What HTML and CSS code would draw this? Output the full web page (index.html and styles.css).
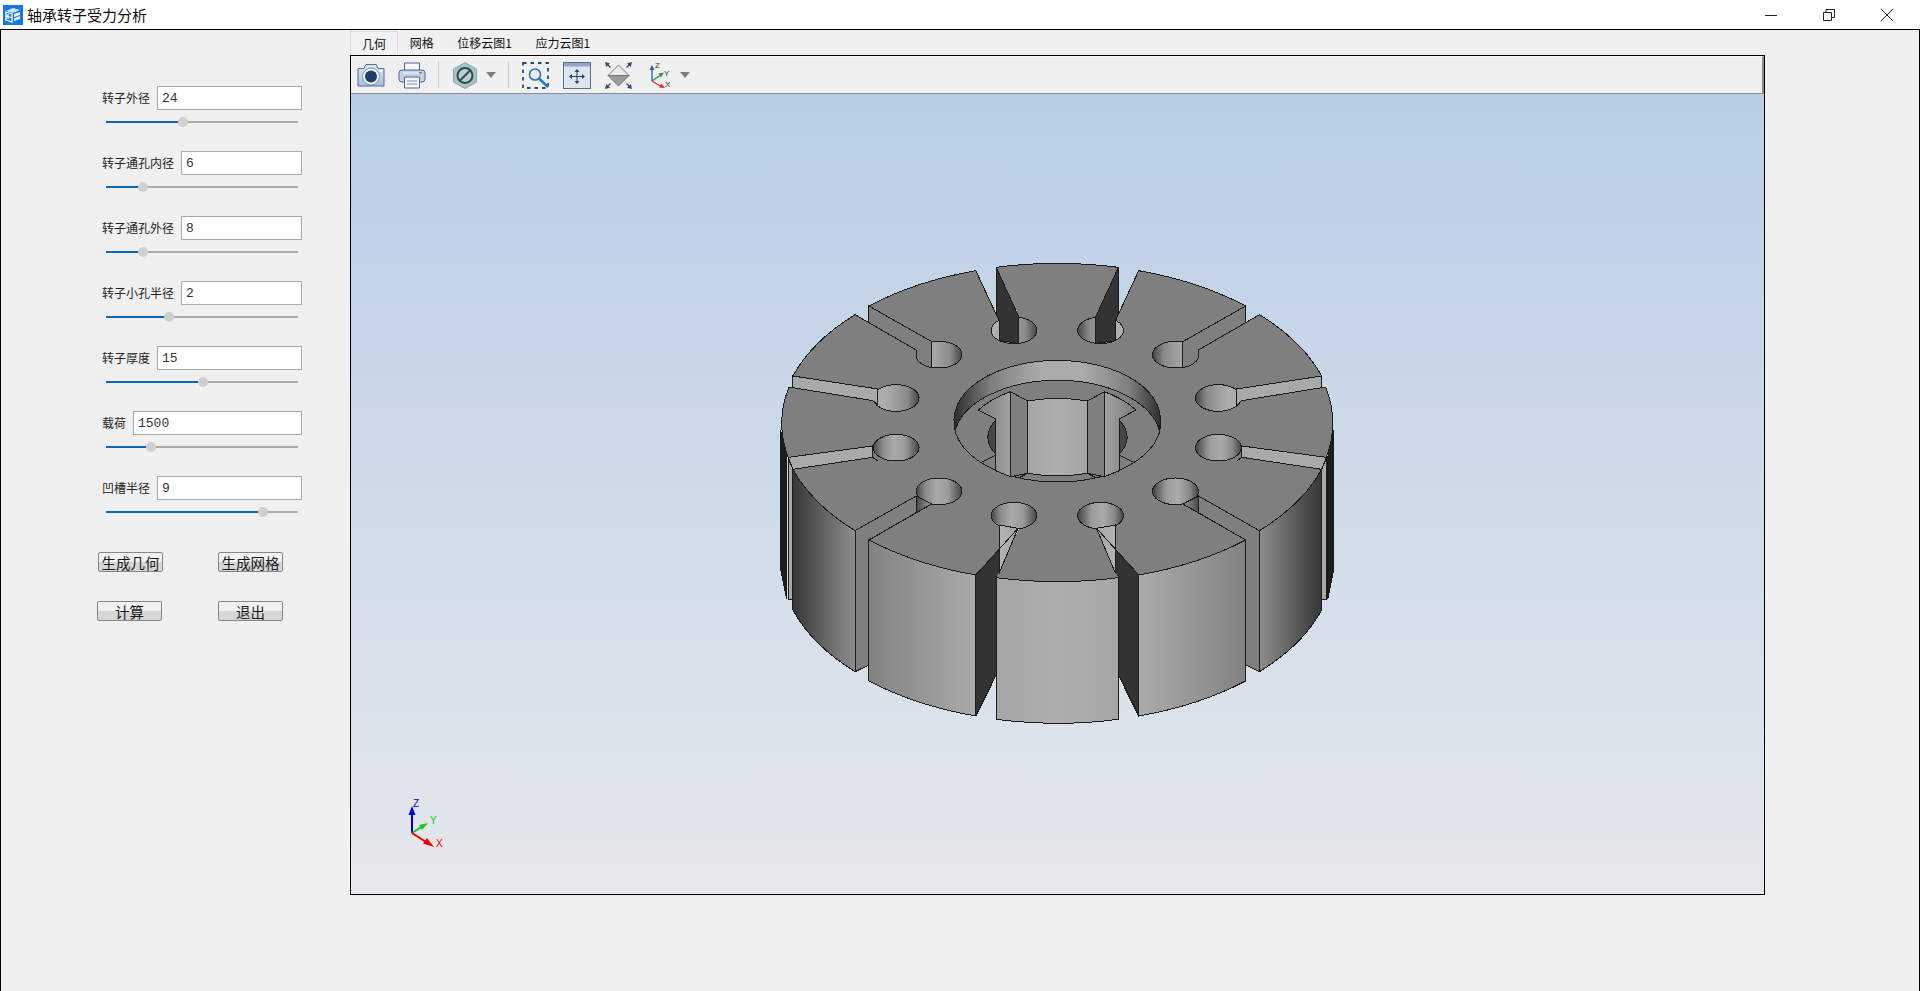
FILE: index.html
```html
<!DOCTYPE html>
<html lang="zh">
<head>
<meta charset="utf-8">
<title>轴承转子受力分析</title>
<link rel="stylesheet" href="styles.css">
</head>
<body>
<header class="titlebar">
  <svg class="app-icon" width="20" height="20" viewBox="0 0 20 20">
    <rect width="20" height="20" fill="#1a76e3"/>
    <path d="M3 6 L10 3 L17 5 L10 8 Z" fill="#cfe3fb"/>
    <path d="M3 7 L9 9 V17 L3 15 Z M5 9 V14 M3.5 11 L8.5 12.5" fill="none" stroke="#fff" stroke-width="1.3"/>
    <path d="M11 9 L17 7 V10 L11 12 Z M11 13 L17 11 V14 L11 16 Z" fill="#e9f3fe"/>
  </svg>
  <span class="app-title">轴承转子受力分析</span>
  <div class="win-controls">
    <svg width="12" height="12" viewBox="0 0 12 12"><path d="M0 6.5H12" stroke="#222" fill="none"/></svg>
    <svg width="12" height="12" viewBox="0 0 12 12"><path d="M.5 3.5H8.5V11.5H.5Z M3 3V.5H11.5V8.5H9" stroke="#222" fill="none"/></svg>
    <svg width="12" height="12" viewBox="0 0 12 12"><path d="M0 0L12 12M12 0L0 12" stroke="#222" fill="none"/></svg>
  </div>
</header>

<main class="window">
  <aside class="panel">
    <div class="field"><div class="field-row"><label class="field-label">转子外径</label><div class="field-input">24</div></div><div class="slider"><div class="slider-fill" style="width:40%"><i class="thumb"></i></div></div></div>
    <div class="field"><div class="field-row"><label class="field-label">转子通孔内径</label><div class="field-input">6</div></div><div class="slider"><div class="slider-fill" style="width:19.3%"><i class="thumb"></i></div></div></div>
    <div class="field"><div class="field-row"><label class="field-label">转子通孔外径</label><div class="field-input">8</div></div><div class="slider"><div class="slider-fill" style="width:19.3%"><i class="thumb"></i></div></div></div>
    <div class="field"><div class="field-row"><label class="field-label">转子小孔半径</label><div class="field-input">2</div></div><div class="slider"><div class="slider-fill" style="width:32.8%"><i class="thumb"></i></div></div></div>
    <div class="field"><div class="field-row"><label class="field-label">转子厚度</label><div class="field-input">15</div></div><div class="slider"><div class="slider-fill" style="width:50.5%"><i class="thumb"></i></div></div></div>
    <div class="field"><div class="field-row"><label class="field-label">载荷</label><div class="field-input">1500</div></div><div class="slider"><div class="slider-fill" style="width:23.4%"><i class="thumb"></i></div></div></div>
    <div class="field"><div class="field-row"><label class="field-label">凹槽半径</label><div class="field-input">9</div></div><div class="slider"><div class="slider-fill" style="width:81.8%"><i class="thumb"></i></div></div></div>
    <div class="btn-row btn-row-first"><button class="btn">生成几何</button><button class="btn">生成网格</button></div>
    <div class="btn-row btn-row-second"><button class="btn">计算</button><button class="btn">退出</button></div>
  </aside>

  <section class="work">
    <nav class="tabs">
      <div class="tab tab-active">几何</div>
      <div class="tab">网格</div>
      <div class="tab">位移云图1</div>
      <div class="tab">应力云图1</div>
    </nav>
    <div class="frame">
      <div class="toolbar">
        <svg class="tool tool-camera" width="28" height="24" viewBox="0 0 28 24">
          <defs><linearGradient id="camBody" x1="0" y1="0" x2="0" y2="1"><stop offset="0" stop-color="#dfe8f3"/><stop offset="1" stop-color="#a9bfdc"/></linearGradient></defs>
          <path d="M1 5.5H7L9 1.5H19L21 5.5H27V23H1Z" fill="url(#camBody)" stroke="#4f6c9c" stroke-linejoin="round"/>
          <circle cx="14" cy="13.5" r="8.5" fill="#f2f5f9" stroke="#7d93b5"/>
          <circle cx="14" cy="13.5" r="6" fill="#1f3a6d"/>
          <circle cx="24" cy="8" r="1" fill="#fff"/>
        </svg>
        <svg class="tool tool-printer" width="28" height="27" viewBox="0 0 28 27">
          <path d="M6.5 8V1H21.5V8" fill="#f4f6f9" stroke="#4a6794"/>
          <rect x="1" y="8" width="26" height="12" rx="3" fill="#c7d2df" stroke="#4a6794"/>
          <path d="M5 11H23" stroke="#eef2f6"/>
          <rect x="21" y="10" width="3" height="1.5" fill="#6c7f99"/>
          <path d="M6.5 15H21.5V26H6.5Z" fill="#f4f6f9" stroke="#4a6794"/>
          <path d="M9 19H19M9 22H19" stroke="#7d90ab"/>
        </svg>
        <span class="tool-sep"></span>
        <svg class="tool tool-hex" width="24" height="27" viewBox="0 0 24 27">
          <path d="M12 .5L23.5 7V20L12 26.5L.5 20V7Z" fill="#a9c2c4" stroke="#8aa5a8"/>
          <circle cx="12" cy="13.5" r="7.5" fill="#bcd0d1" stroke="#2f4a55" stroke-width="2"/>
          <path d="M7 18.5L17 8.5" stroke="#2f4a55" stroke-width="2"/>
        </svg>
        <svg class="tool tool-caret" width="10" height="6" viewBox="0 0 10 6"><path d="M0 0H10L5 6Z" fill="#808080"/></svg>
        <span class="tool-sep tool-sep-two"></span>
        <svg class="tool tool-zoom" width="27" height="27" viewBox="0 0 27 27">
          <rect x="1" y="1" width="25" height="25" fill="none" stroke="#2d4a7c" stroke-width="1.8" stroke-dasharray="3.5 4"/>
          <circle cx="13" cy="12.5" r="5.5" fill="#eaf1f8" stroke="#2e74b5" stroke-width="1.6"/>
          <path d="M17 16.5L26 25" stroke="#2478c4" stroke-width="2.6"/>
        </svg>
        <svg class="tool tool-fit" width="28" height="27" viewBox="0 0 28 27">
          <rect x=".5" y=".5" width="27" height="26" fill="#dde5f0" stroke="#5f6f88"/>
          <rect x="1" y="1" width="26" height="3.5" fill="#8fa6c6"/>
          <path d="M14 8V21M7.5 14.5H20.5" stroke="#24406e"/>
          <path d="M14 7L11.5 10H16.5Z M14 22L11.5 19H16.5Z M6 14.5L9 12V17Z M22 14.5L19 12V17Z" fill="#24406e"/>
        </svg>
        <svg class="tool tool-diamond" width="27" height="27" viewBox="0 0 27 27">
          <path d="M13.5 3L24 13.5H3Z" fill="#ececec" stroke="#7a7a7a"/>
          <path d="M3 13.5H24L13.5 24Z" fill="#9a9a9a" stroke="#7a7a7a"/>
          <path d="M0 0L5 1.2L1.2 5Z M27 0L22 1.2L25.8 5Z M0 27L5 25.8L1.2 22Z M27 27L22 25.8L25.8 22Z" fill="#2d4a7c"/>
          <path d="M1.5 1.5L5.5 5.5M25.5 1.5L21.5 5.5M1.5 25.5L5.5 21.5M25.5 25.5L21.5 21.5" stroke="#2d4a7c" stroke-width="1.2"/>
        </svg>
        <svg class="tool tool-axis" width="24" height="28" viewBox="0 0 24 28">
          <path d="M4 20V7" stroke="#2c5aa8" stroke-width="1.3"/><path d="M4 4L1.5 9H6.5Z" fill="#2c5aa8"/>
          <path d="M4 20L14 13" stroke="#2a9a4a" stroke-width="1.3"/><path d="M16 11.5L10.5 12.5L13 16.5Z" fill="#2a9a4a"/>
          <path d="M4 20L14 26" stroke="#e03030" stroke-width="1.3"/><path d="M17 27L11 26.5L13.5 22.5Z" fill="#e03030"/>
          <text x="7" y="7" class="axis-letter">Z</text><text x="16" y="15" class="axis-letter">Y</text><text x="17" y="26" class="axis-letter">X</text>
        </svg>
        <svg class="tool tool-caret tool-caret-two" width="10" height="6" viewBox="0 0 10 6"><path d="M0 0H10L5 6Z" fill="#808080"/></svg>
      </div>
      <div class="viewport">
        <svg class="scene" width="1413" height="799" viewBox="351 94 1413 799">
          <defs>
            <linearGradient id="hFull" x1="0" x2="1" y1="0" y2="0"><stop offset="0" stop-color="#454545"/><stop offset=".3" stop-color="#9a9a9a"/><stop offset=".55" stop-color="#ababab"/><stop offset=".8" stop-color="#8a8a8a"/><stop offset="1" stop-color="#454545"/></linearGradient>
            <linearGradient id="hOpen" x1="0" x2="1" y1="0" y2="0"><stop offset="0" stop-color="#454545"/><stop offset=".25" stop-color="#8a8a8a"/><stop offset=".7" stop-color="#ababab"/><stop offset="1" stop-color="#b0b0b0"/></linearGradient>
            <linearGradient id="wallFar" x1="0" x2="1" y1="0" y2="0"><stop offset="0" stop-color="#8e8e8e"/><stop offset="1" stop-color="#363636"/></linearGradient>
            <linearGradient id="wallNear" x1="0" x2="1" y1="0" y2="0"><stop offset="0" stop-color="#ababab"/><stop offset="1" stop-color="#828282"/></linearGradient>
            <linearGradient id="wallMid" x1="0" x2="1" y1="0" y2="0"><stop offset="0" stop-color="#a5a5a5"/><stop offset=".5" stop-color="#aeaeae"/><stop offset="1" stop-color="#a5a5a5"/></linearGradient>
            <linearGradient id="ext" x1="0" x2="1" y1="0" y2="0"><stop offset="0" stop-color="#9a9a9a"/><stop offset="1" stop-color="#484848"/></linearGradient>
            <linearGradient id="tri" x1="0" x2="1" y1="0" y2="0"><stop offset="0" stop-color="#a4a4a4"/><stop offset="1" stop-color="#b4b4b4"/></linearGradient>
            <linearGradient id="ring" x1="0" x2="1" y1="0" y2="0"><stop offset="0" stop-color="#2e2e2e"/><stop offset=".18" stop-color="#7f7f7f"/><stop offset=".42" stop-color="#ababab"/><stop offset=".62" stop-color="#ababab"/><stop offset=".85" stop-color="#7f7f7f"/><stop offset="1" stop-color="#2e2e2e"/></linearGradient>
            <linearGradient id="spokeL" x1="0" x2="1" y1="0" y2="0"><stop offset="0" stop-color="#7a7a7a"/><stop offset="1" stop-color="#a2a2a2"/></linearGradient>
            <linearGradient id="spokeR" x1="0" x2="1" y1="0" y2="0"><stop offset="0" stop-color="#a2a2a2"/><stop offset="1" stop-color="#7a7a7a"/></linearGradient>
          </defs>

          <g transform="translate(770 250) scale(.363636 .333333)" class="model">
            <g id="wallsR">
              <polygon class="black" points="1551,540 1534,622 1534,1048 1551,955"/>
              <polygon class="light" points="1517,658 1530,625 1530,1048 1517,1050"/>
              <polygon class="grey" points="1178,738 1346,842 1346,1265 1308,1245 1308,870 1178,788"/>
              <path fill="url(#wallFar)" class="stroke" d="M1517,658 A760,478 0 0 1 1346,842 L1346,1265 A760,478 0 0 0 1517,1080 Z"/>
              <polygon class="dark" points="950,825 1014,975 1014,1398 958,1275 958,983 950,970"/>
              <path fill="url(#wallNear)" class="stroke" d="M1308,870 A760,478 0 0 1 1014,975 L1014,1398 A760,478 0 0 0 1308,1293 Z"/>
            </g>
            <use href="#wallsR" transform="translate(1580 0) scale(-1 1)"/>
            <path fill="url(#wallMid)" class="stroke" d="M622,983 A760,478 0 0 0 958,983 L958,1408 A760,478 0 0 1 622,1408 Z"/>

            <polygon class="face" points="960,240 1178,300 1283,417 1298,588 1298,622 1178,738 1135,762 898,835 682,835 445,762 402,738 282,622 282,588 297,417 402,300 620,240"/>
            <path class="face" d="M622,52 A760,478 0 0 1 958,52 L896,200 L896,300 L686,300 L686,200 Z"/>
            <path class="face" d="M622,983 A760,478 0 0 0 958,983 L897,835 L790,760 L685,835 Z"/>
            <path class="edge" d="M622,983 A760,478 0 0 0 958,983"/>

            <g id="topR">
              <path class="face" d="M1014,62 A760,478 0 0 1 1308,168 L1135,275 L1000,300 L950,212 Z"/>
              <path class="face" d="M1346,194 A760,478 0 0 1 1517,378 L1283,417 L1170,400 L1178,300 Z"/>
              <path class="face" d="M1528,412 A760,478 0 0 1 1530,622 L1298,588 L1200,600 L1190,480 L1297,452 Z"/>
              <path class="face" d="M1517,658 A760,478 0 0 1 1346,842 L1178,738 L1160,640 L1284,632 L1298,622 Z"/>
              <path class="face" d="M1308,870 A760,478 0 0 1 1014,975 L898,835 L960,780 L1135,762 Z"/>

              <ellipse fill="url(#hOpen)" class="stroke" cx="909" cy="241" rx="63" ry="40"/>
              <ellipse fill="url(#hOpen)" class="stroke" cx="1115" cy="314" rx="63" ry="40"/>
              <ellipse fill="url(#hOpen)" class="stroke" cx="1233" cy="444" rx="63" ry="40"/>
              <ellipse fill="url(#hFull)" class="stroke" cx="1233" cy="593" rx="63" ry="40"/>
              <ellipse fill="url(#hFull)" class="stroke" cx="1115" cy="724" rx="63" ry="40"/>
              <ellipse fill="url(#hFull)" class="stroke" cx="909" cy="797" rx="63" ry="40"/>

              <polygon class="dark" points="958,52 896,200 896,280 950,272 950,212 958,190"/>
              <path class="grey" d="M1135,275 L1308,168 L1308,218 L1178,300 L1178,322 A63,40 0 0 1 1135,353 Z"/>
              <polygon class="light" points="1283,417 1517,378 1517,413 1297,452 1283,465"/>
              <polygon class="light" points="1298,588 1530,622 1517,658 1298,622"/>
              <polygon fill="url(#ext)" class="stroke" points="1135,762 1178,788 1178,738"/>
              <polygon fill="url(#tri)" class="stroke" points="950,825 950,970 898,835"/>

              <path class="edge" d="M950,212 L1014,62 A760,478 0 0 1 1308,168"/>
              <path class="edge" d="M1178,300 L1346,194 A760,478 0 0 1 1517,378"/>
              <path class="edge" d="M1517,413 L1528,412 A760,478 0 0 1 1530,622"/>
              <path class="edge" d="M1298,622 L1517,658 A760,478 0 0 1 1346,842 L1178,738"/>
              <path class="edge" d="M1298,622 L1284,632"/>
              <path class="edge" d="M1135,762 L1308,870 A760,478 0 0 1 1014,975 L898,835"/>
            </g>
            <use href="#topR" transform="translate(1580 0) scale(-1 1)"/>
            <path class="edge" d="M622,52 A760,478 0 0 1 958,52"/>

            <ellipse class="face-line" cx="790.6" cy="518" rx="284" ry="178"/>
            <path fill="url(#ring)" class="stroke" d="M510,539 A284,178 0 1 1 1070,539 A284,178 0 0 0 510,539 Z"/>

            <g transform="translate(440 300) scale(.916667 1)">
              <path class="crescent" d="M197,210 Q150,262 197,312 Z"/>
              <path class="crescent" d="M568,210 Q615,262 568,312 Z"/>
              <path fill="url(#spokeL)" class="stroke" d="M197,207 L145,180 A310,178 0 0 1 241,125 L241,380 L197,362 Z"/>
              <path class="grey" d="M241,125 L293,153 L293,370 L241,380 Z"/>
              <path fill="url(#wallMid)" class="stroke" d="M293,153 A310,178 0 0 1 472,153 L472,370 A310,178 0 0 1 293,370 Z"/>
              <path class="grey" d="M523,125 L472,153 L472,370 L523,380 Z"/>
              <path fill="url(#spokeR)" class="stroke" d="M568,207 L618,180 A310,178 0 0 0 523,125 L523,380 L568,362 Z"/>
              <path class="edge" d="M197,315 L152,338 M568,315 L612,338 M268,383 L293,370 M472,370 L497,383"/>
            </g>
          </g>

          <g class="triad">
            <path d="M412 833V812" stroke="#0000e6" stroke-width="2"/><path d="M412 806L408.5 815H415.5Z" fill="#0000e6"/>
            <path d="M412 833L423 826" stroke="#12c81e" stroke-width="2"/><path d="M428 823L419 825L422 830Z" fill="#12c81e"/>
            <path d="M412 833L426 842" stroke="#e60000" stroke-width="2"/><path d="M434 847L423 843.5L427 838Z" fill="#e60000"/>
            <text x="413" y="807" class="triad-z">Z</text>
            <text x="430" y="824" class="triad-y">Y</text>
            <text x="436" y="847" class="triad-x">X</text>
          </g>
        </svg>
      </div>
    </div>
  </section>
</main>
</body>
</html>
```
FILE: styles.css
```css
html, body {
  margin: 0;
  height: 991px;
  overflow: hidden;
  background: #f0f0f0;
  font-family: "Noto Sans CJK SC", "Noto Sans", sans-serif;
  color: #1a1a1a;
}

body { display: flex; flex-direction: column; }

.titlebar {
  height: 29px;
  background: #fff;
  display: flex;
  align-items: center;
  padding-left: 3px;
  flex: none;
}
.app-icon { flex: none; }
.app-title { margin-left: 4px; font-size: 15px; line-height: 29px; color: #111; }
.win-controls {
  margin-left: auto;
  width: 155px;
  display: flex;
  gap: 46px;
}

.window {
  flex: 1;
  border: 1px solid #000;
  border-bottom: 0;
  display: flex;
  background: #f0f0f0;
  min-height: 0;
}

.panel { width: 349px; flex: none; padding-top: 56px; box-sizing: border-box; }
.field { height: 65px; padding-left: 101px; width: 301px; box-sizing: border-box; }
.field-row { display: flex; align-items: center; gap: 7px; height: 24px; }
.field-label { font-size: 12px; line-height: 22px; color: #222; white-space: nowrap; }
.field-input {
  flex: 1;
  height: 24px;
  box-sizing: border-box;
  border: 1px solid #a8a8a8;
  background: #fff;
  font-family: "Liberation Mono", monospace;
  font-size: 13px;
  line-height: 23px;
  padding-left: 4px;
  color: #333;
}
.slider {
  margin: 11px 0 0 4px;
  width: 192px;
  height: 2px;
  background: #ababab;
}
.slider-fill { position: relative; height: 2px; background: #0a68b8; }
.thumb {
  position: absolute;
  right: -5px;
  top: -4px;
  width: 10px;
  height: 10px;
  border-radius: 50%;
  background: #cfcfcf;
}

.btn-row { display: flex; }
.btn-row-first { margin-top: 11px; padding-left: 97px; gap: 55px; }
.btn-row-second { margin-top: 29px; padding-left: 96px; gap: 56px; }
.btn {
  width: 65px;
  height: 20px;
  padding: 0;
  box-sizing: border-box;
  border: 1px solid #868686;
  border-radius: 2px;
  background: linear-gradient(#f1f1f1 0 50%, #d6d6d6 50% 100%);
  font-family: inherit;
  font-size: 14.5px;
  line-height: 17px;
  color: #1a1a1a;
  white-space: nowrap;
  overflow: hidden;
}

.work { width: 1415px; flex: none; display: flex; flex-direction: column; }
.tabs { display: flex; height: 24px; margin-top: 1px; font-size: 12px; }
.tab { padding: 0 11.75px; line-height: 24px; white-space: nowrap; color: #111; }
.tab-active { border: 1px solid #dcdcdc; border-bottom: 0; padding: 0 11px; line-height: 23px; box-sizing: border-box; background: #f2f2f2; }

.frame { height: 840px; border: 1px solid #000; box-sizing: border-box; display: flex; flex-direction: column; }
.toolbar {
  height: 38px;
  flex: none;
  box-sizing: border-box;
  background: #f0f0f0;
  border-bottom: 1px solid #8c8c8c;
  border-right: 2px solid #8c8c8c;
  border-top: 1px solid #fafafa;
  display: flex;
  align-items: center;
  padding-left: 6px;
}
.tool { flex: none; display: block; }
.tool-printer { margin-left: 13px; }
.tool-sep { width: 1px; height: 26px; background: #c6c6c6; margin-left: 12px; flex: none; }
.tool-hex { margin-left: 14px; }
.tool-caret { margin-left: 9px; }
.tool-sep-two { margin-left: 12px; }
.tool-zoom { margin-left: 13px; }
.tool-fit { margin-left: 14px; }
.tool-diamond { margin-left: 14px; }
.tool-axis { margin-left: 16px; }
.tool-caret-two { margin-left: 8px; }
.axis-letter { font-family: "Liberation Sans", sans-serif; font-size: 8px; fill: #333; }

.viewport {
  flex: 1;
  min-height: 0;
  background: linear-gradient(#b9cee6, #e5e8ec);
}
.scene { display: block; }

.model * { vector-effect: non-scaling-stroke; shape-rendering: crispEdges; }
.stroke { stroke: #1b1b1b; stroke-width: 1; }
.face { fill: #7f7f7f; }
.face-line { fill: #7f7f7f; stroke: #1b1b1b; stroke-width: 1; }
.edge { fill: none; stroke: #1b1b1b; stroke-width: 1; }
.grey { fill: #7f7f7f; stroke: #1b1b1b; stroke-width: 1; }
.light { fill: #a9a9a9; stroke: #1b1b1b; stroke-width: 1; }
.dark { fill: #333; stroke: #1b1b1b; stroke-width: 1; }
.black { fill: #1d1d1d; stroke: #1b1b1b; stroke-width: 1; }
.crescent { fill: #474747; stroke: #1b1b1b; stroke-width: 1; }

.triad text { font-family: "Liberation Sans", sans-serif; font-size: 10px; }
.triad-z { fill: #0000e6; }
.triad-y { fill: #12c81e; }
.triad-x { fill: #e60000; }
```
